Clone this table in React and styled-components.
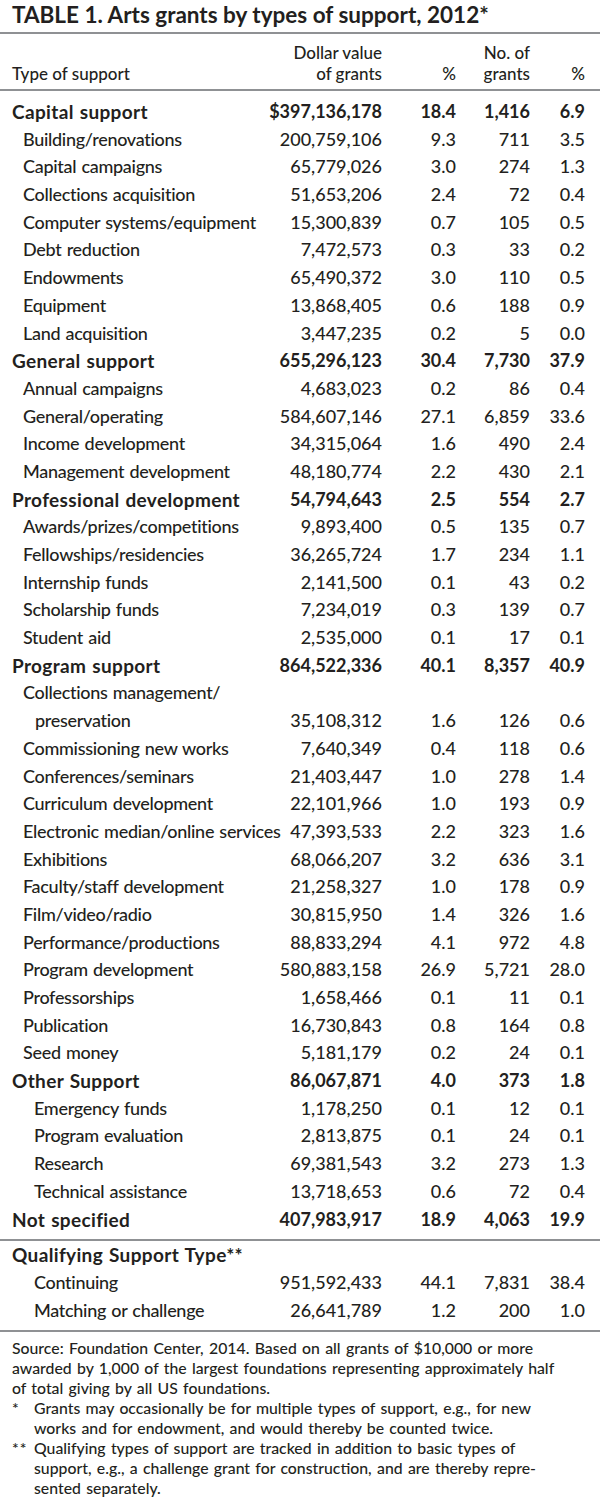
import React from "react";
import styled, { createGlobalStyle } from "styled-components";

const GlobalStyle = createGlobalStyle`
  html, body {
    margin: 0;
    padding: 0;
    background: #ffffff;
  }
  body {
    font-family: Lato, "Liberation Sans", sans-serif;
    color: #231f20;
  }
`;

const Page = styled.div`
  width: 600px;
  height: 1502px;
  overflow: hidden;
  background: #ffffff;
`;

const Title = styled.h1`
  margin: 0;
  padding: 2px 0 4px 12px;
  font-size: 22.5px;
  line-height: 26px;
  font-weight: 700;
  border-bottom: 2px solid #8f9194;
  white-space: nowrap;
`;

const Grid = styled.div`
  display: grid;
  grid-template-columns: minmax(0, 1fr) 120px 74px 74px 55px;
  padding: 0 15px 0 12px;
`;

const HeadRow = styled(Grid)`
  padding-top: 8px;
  padding-bottom: 5px;
  border-bottom: 2px solid #8f9194;
  font-size: 17px;
  line-height: 21px;
  font-weight: 500;
  align-items: end;
`;

const HeadCell = styled.div`
  text-align: ${(p) => (p.$left ? "left" : "right")};
  white-space: nowrap;
`;

const Body = styled.div`
  padding: ${(p) => p.$pad};
  border-bottom: 2px solid #8f9194;
`;

const Row = styled(Grid)`
  font-size: 18px;
  line-height: 27.68px;
  font-weight: ${(p) => (p.$bold ? 700 : 500)};
`;

const Label = styled.div`
  padding-left: ${(p) => p.$indent}px;
  white-space: nowrap;
  font-size: ${(p) => (p.$bold ? "19px" : "18px")};
  letter-spacing: ${(p) => (p.$bold ? "0.35px" : "-0.3px")};
  word-spacing: 1px;
`;

const Num = styled.div`
  text-align: right;
  white-space: nowrap;
`;

const Notes = styled.div`
  padding: 6px 6px 0 12px;
  font-size: 15.8px;
  line-height: 20px;
  font-weight: 500;
  word-spacing: 1.3px;
`;

const Source = styled.p`
  margin: 0;
  white-space: nowrap;
`;

const Note = styled.div`
  display: grid;
  grid-template-columns: 22px 1fr;
  white-space: nowrap;
`;

const Mark = styled.span`
  letter-spacing: 1px;
`;

const main = [
  [0, "Capital support", "$397,136,178", "18.4", "1,416", "6.9"],
  [1, "Building/renovations", "200,759,106", "9.3", "711", "3.5"],
  [1, "Capital campaigns", "65,779,026", "3.0", "274", "1.3"],
  [1, "Collections acquisition", "51,653,206", "2.4", "72", "0.4"],
  [1, "Computer systems/equipment", "15,300,839", "0.7", "105", "0.5"],
  [1, "Debt reduction", "7,472,573", "0.3", "33", "0.2"],
  [1, "Endowments", "65,490,372", "3.0", "110", "0.5"],
  [1, "Equipment", "13,868,405", "0.6", "188", "0.9"],
  [1, "Land acquisition", "3,447,235", "0.2", "5", "0.0"],
  [0, "General support", "655,296,123", "30.4", "7,730", "37.9"],
  [1, "Annual campaigns", "4,683,023", "0.2", "86", "0.4"],
  [1, "General/operating", "584,607,146", "27.1", "6,859", "33.6"],
  [1, "Income development", "34,315,064", "1.6", "490", "2.4"],
  [1, "Management development", "48,180,774", "2.2", "430", "2.1"],
  [0, "Professional development", "54,794,643", "2.5", "554", "2.7"],
  [1, "Awards/prizes/competitions", "9,893,400", "0.5", "135", "0.7"],
  [1, "Fellowships/residencies", "36,265,724", "1.7", "234", "1.1"],
  [1, "Internship funds", "2,141,500", "0.1", "43", "0.2"],
  [1, "Scholarship funds", "7,234,019", "0.3", "139", "0.7"],
  [1, "Student aid", "2,535,000", "0.1", "17", "0.1"],
  [0, "Program support", "864,522,336", "40.1", "8,357", "40.9"],
  [1, "Collections management/", "", "", "", ""],
  [3, "preservation", "35,108,312", "1.6", "126", "0.6"],
  [1, "Commissioning new works", "7,640,349", "0.4", "118", "0.6"],
  [1, "Conferences/seminars", "21,403,447", "1.0", "278", "1.4"],
  [1, "Curriculum development", "22,101,966", "1.0", "193", "0.9"],
  [1, "Electronic median/online services", "47,393,533", "2.2", "323", "1.6"],
  [1, "Exhibitions", "68,066,207", "3.2", "636", "3.1"],
  [1, "Faculty/staff development", "21,258,327", "1.0", "178", "0.9"],
  [1, "Film/video/radio", "30,815,950", "1.4", "326", "1.6"],
  [1, "Performance/productions", "88,833,294", "4.1", "972", "4.8"],
  [1, "Program development", "580,883,158", "26.9", "5,721", "28.0"],
  [1, "Professorships", "1,658,466", "0.1", "11", "0.1"],
  [1, "Publication", "16,730,843", "0.8", "164", "0.8"],
  [1, "Seed money", "5,181,179", "0.2", "24", "0.1"],
  [0, "Other Support", "86,067,871", "4.0", "373", "1.8"],
  [2, "Emergency funds", "1,178,250", "0.1", "12", "0.1"],
  [2, "Program evaluation", "2,813,875", "0.1", "24", "0.1"],
  [2, "Research", "69,381,543", "3.2", "273", "1.3"],
  [2, "Technical assistance", "13,718,653", "0.6", "72", "0.4"],
  [0, "Not specified", "407,983,917", "18.9", "4,063", "19.9"],
];

const qualifying = [
  [0, "Qualifying Support Type**", "", "", "", ""],
  [2, "Continuing", "951,592,433", "44.1", "7,831", "38.4"],
  [2, "Matching or challenge", "26,641,789", "1.2", "200", "1.0"],
];

const indents = [0, 11, 22, 23];

const DataRow = ({ level, label, cells }) => {
  const bold = level === 0;
  return (
    <Row $bold={bold}>
      <Label $indent={indents[level]} $bold={bold}>
        {label}
      </Label>
      {cells.map((c, i) => (
        <Num key={i}>{c}</Num>
      ))}
    </Row>
  );
};

const renderRows = (list) =>
  list.map(([level, label, ...cells]) => (
    <DataRow key={label} level={level} label={label} cells={cells} />
  ));

export default function App() {
  return (
    <Page>
      <GlobalStyle />
      <Title>TABLE 1. Arts grants by types of support, 2012*</Title>
      <HeadRow>
        <HeadCell $left>Type of support</HeadCell>
        <HeadCell>
          Dollar value
          <br />
          of grants
        </HeadCell>
        <HeadCell>%</HeadCell>
        <HeadCell>
          No. of
          <br />
          grants
        </HeadCell>
        <HeadCell>%</HeadCell>
      </HeadRow>
      <Body $pad="7px 0 6px">{renderRows(main)}</Body>
      <Body $pad="0 0 6px">{renderRows(qualifying)}</Body>
      <Notes>
        <Source>
          Source: Foundation Center, 2014. Based on all grants of $10,000 or more
          <br />
          awarded by 1,000 of the largest foundations representing approximately half
          <br />
          of total giving by all US foundations.
        </Source>
        <Note>
          <Mark>*</Mark>
          <span>
            Grants may occasionally be for multiple types of support, e.g., for new
            <br />
            works and for endowment, and would thereby be counted twice.
          </span>
        </Note>
        <Note>
          <Mark>**</Mark>
          <span>
            Qualifying types of support are tracked in addition to basic types of
            <br />
            support, e.g., a challenge grant for construction, and are thereby repre-
            <br />
            sented separately.
          </span>
        </Note>
      </Notes>
    </Page>
  );
}
